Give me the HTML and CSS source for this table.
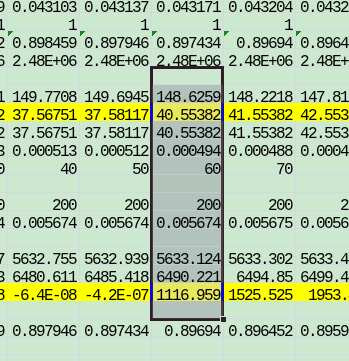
FILE: index.html
```html
<!DOCTYPE html>
<html>
<head>
<meta charset="utf-8">
<link rel="stylesheet" href="styles.css">
</head>
<body>
<div class="sheet">
  <div class="row"><div class="c">0.043069</div><div class="c">0.043103</div><div class="c">0.043137</div><div class="c">0.043171</div><div class="c">0.043204</div><div class="c">0.043238</div></div>
  <div class="row"><div class="c">1</div><div class="c">1</div><div class="c">1</div><div class="c">1</div><div class="c">1</div><div class="c">1</div></div>
  <div class="row"><div class="c">0.898972</div><div class="c tri">0.898459</div><div class="c tri">0.897946</div><div class="c tri">0.897434</div><div class="c tri">0.89694</div><div class="c tri">0.896452</div></div>
  <div class="row"><div class="c">2.48E+06</div><div class="c">2.48E+06</div><div class="c">2.48E+06</div><div class="c">2.48E+06</div><div class="c">2.48E+06</div><div class="c">2.48E+06</div></div>
  <div class="row"><div class="c"></div><div class="c"></div><div class="c"></div><div class="c act"></div><div class="c"></div><div class="c"></div></div>
  <div class="row"><div class="c">149.8471</div><div class="c">149.7708</div><div class="c">149.6945</div><div class="c s">148.6259</div><div class="c">148.2218</div><div class="c">147.8177</div></div>
  <div class="row hl"><div class="c">37.55382</div><div class="c">37.56751</div><div class="c">37.58117</div><div class="c s">40.55382</div><div class="c">41.55382</div><div class="c">42.55382</div></div>
  <div class="row"><div class="c">37.55382</div><div class="c">37.56751</div><div class="c">37.58117</div><div class="c s">40.55382</div><div class="c">41.55382</div><div class="c">42.55382</div></div>
  <div class="row"><div class="c">0.000523</div><div class="c">0.000513</div><div class="c">0.000512</div><div class="c s">0.000494</div><div class="c">0.000488</div><div class="c">0.000482</div></div>
  <div class="row"><div class="c">30</div><div class="c">40</div><div class="c">50</div><div class="c s">60</div><div class="c">70</div><div class="c">80</div></div>
  <div class="row"><div class="c"></div><div class="c"></div><div class="c"></div><div class="c s"></div><div class="c"></div><div class="c"></div></div>
  <div class="row"><div class="c">200</div><div class="c">200</div><div class="c">200</div><div class="c s">200</div><div class="c">200</div><div class="c">200</div></div>
  <div class="row"><div class="c">0.005674</div><div class="c">0.005674</div><div class="c">0.005674</div><div class="c s">0.005674</div><div class="c">0.005675</div><div class="c">0.005675</div></div>
  <div class="row"><div class="c"></div><div class="c"></div><div class="c"></div><div class="c s"></div><div class="c"></div><div class="c"></div></div>
  <div class="row"><div class="c">5632.577</div><div class="c">5632.755</div><div class="c">5632.939</div><div class="c s">5633.124</div><div class="c">5633.302</div><div class="c">5633.481</div></div>
  <div class="row"><div class="c">6475.803</div><div class="c">6480.611</div><div class="c">6485.418</div><div class="c s">6490.221</div><div class="c">6494.85</div><div class="c">6499.456</div></div>
  <div class="row hl"><div class="c">1.6E-08</div><div class="c">-6.4E-08</div><div class="c">-4.2E-07</div><div class="c s">1116.959</div><div class="c">1525.525</div><div class="c">1953.48</div></div>
  <div class="row"><div class="c"></div><div class="c"></div><div class="c"></div><div class="c s"></div><div class="c"></div><div class="c"></div></div>
  <div class="row"><div class="c">0.898459</div><div class="c">0.897946</div><div class="c">0.897434</div><div class="c">0.89694</div><div class="c">0.896452</div><div class="c">0.895965</div></div>
  <div class="row"><div class="c"></div><div class="c"></div><div class="c"></div><div class="c"></div><div class="c"></div><div class="c"></div></div>
  <div class="row"><div class="c"></div><div class="c"></div><div class="c"></div><div class="c"></div><div class="c"></div><div class="c"></div></div>
</div>
<div class="selection"></div>
<div class="handle"></div>
</body>
</html>
```
FILE: styles.css
```css
html, body {
  margin: 0;
  padding: 0;
  background: #cce8cf;
  overflow: hidden;
  width: 349px;
  height: 361px;
}
.sheet {
  margin: -5px 0 0 -64px;
  width: 432px;
  font-family: "Liberation Mono", "DejaVu Sans Mono", monospace;
  font-size: 16px;
  letter-spacing: -1.6px;
  color: #000;
}
.row {
  display: flex;
  height: 18px;
}
.c {
  box-sizing: border-box;
  width: 72px;
  height: 18px;
  flex: none;
  border-right: 1px solid #d3d8e4;
  border-bottom: 1px solid #d3d8e4;
  text-align: right;
  padding: 5px 3px 0 0;
  line-height: 16px;
  white-space: nowrap;
  overflow: hidden;
}
.tri {
  background-image: linear-gradient(135deg, #138a1c 0 3.6px, transparent 3.6px);
  background-size: 6px 6px;
  background-repeat: no-repeat;
}
.hl .c {
  background-color: #ffff00;
  border-right-color: #ffff00;
  border-bottom-color: #ffff00;
}
.c.s {
  background-color: #b2c3bc;
  border-bottom-color: #c2cbcc;
}
.hl .c.s {
  background-color: #e8e85c;
  border-bottom-color: #e8e85c;
}
.selection {
  position: absolute;
  left: 150px;
  top: 66px;
  width: 74px;
  height: 255px;
  box-sizing: border-box;
  border: 3px solid #ffffff;
  mix-blend-mode: difference;
}
.handle {
  position: absolute;
  left: 221px;
  top: 317px;
  width: 5px;
  height: 5px;
  background: #2e1a2e;
  box-shadow: 0 0 0 1px #cce8cf;
}
```
